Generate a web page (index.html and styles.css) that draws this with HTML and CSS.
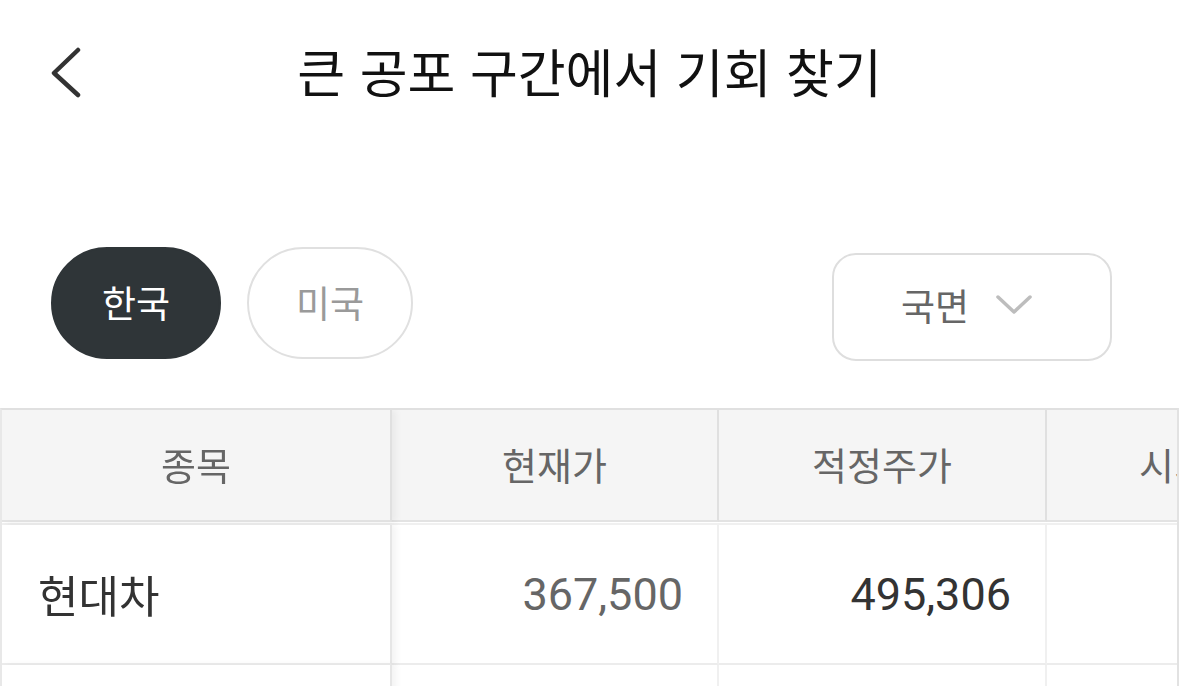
FILE: index.html
```html
<!DOCTYPE html>
<html lang="ko">
<head>
    <meta charset="UTF-8">
    <meta name="viewport" content="width=device-width, initial-scale=1.0">
    <title>큰 공포 구간에서 기회 찾기</title>
    <link rel="stylesheet" href="styles.css">
</head>
<body>
    <header class="topbar">
        <button class="back-btn" aria-label="뒤로">
            <svg width="36" height="52" viewBox="0 0 36 52">
                <polyline points="30,4 6,27 30,49" fill="none" stroke="#333" stroke-width="4.5" stroke-linecap="round" stroke-linejoin="round"/>
            </svg>
        </button>
        <h1 class="title">큰 공포 구간에서 기회 찾기</h1>
        <div></div>
    </header>

    <div class="filters">
        <div class="market-tabs">
            <button class="market-btn active">한국</button>
            <button class="market-btn">미국</button>
        </div>
        <button class="phase-select">
            <span>국면</span>
            <svg width="38" height="24" viewBox="0 0 38 24">
                <polyline points="3,4 19,19 35,4" fill="none" stroke="#bdbdbd" stroke-width="3.5" stroke-linecap="round" stroke-linejoin="round"/>
            </svg>
        </button>
    </div>

    <div class="stock-table">
        <div class="row head">
            <div class="cell name">종목</div>
            <div class="cell">현재가</div>
            <div class="cell">적정주가</div>
            <div class="cell">시가총액</div>
        </div>
        <div class="body">
            <div class="row">
                <div class="cell name">현대차</div>
                <div class="cell num muted">367,500</div>
                <div class="cell num">495,306</div>
                <div class="cell num"></div>
            </div>
            <!-- next row is still loading -->
            <div class="row">
                <div class="cell name"></div>
                <div class="cell num muted"></div>
                <div class="cell num"></div>
                <div class="cell num"></div>
            </div>
        </div>
    </div>
</body>
</html>
```

FILE: styles.css
```css
body {
    margin: 0;
    background-color: #fff;
    color: #222;
    font-family: "Noto Sans CJK KR", "Noto Sans", sans-serif;
    overflow: hidden;
}
button {
    font-family: inherit;
    cursor: pointer;
    outline: none;
}

/* top bar */
.topbar {
    height: 144px;
    display: grid;
    grid-template-columns: 1fr auto 1fr;
    align-items: center;
}
.back-btn {
    justify-self: start;
    margin-left: 48px;
    padding: 0;
    border: none;
    background: none;
    display: flex;
}
.title {
    margin: 0 0 4px;
    font-size: 52px;
    font-weight: 400;
    color: #111;
}

/* market + phase filters */
.filters {
    margin-top: 103px;
    padding: 0 67px 0 51px;
    display: flex;
    justify-content: space-between;
    align-items: flex-start;
}
.market-tabs {
    display: flex;
    gap: 26px;
}
.market-btn {
    width: 166px;
    height: 112px;
    border: 2px solid #e0e0e0;
    border-radius: 56px;
    background-color: #fff;
    color: #9a9a9a;
    font-size: 37px;
    padding-bottom: 4px;
}
.market-btn.active {
    width: 170px;
    border-color: #2f3538;
    background-color: #2f3538;
    color: #fff;
}
.phase-select {
    margin-top: 6px;
    width: 280px;
    height: 108px;
    border: 2px solid #dedede;
    border-radius: 24px;
    background-color: #fff;
    color: #666;
    font-size: 37px;
    display: flex;
    align-items: center;
    justify-content: center;
    gap: 26px;
    padding: 0 10px 4px 0;
}

/* stock table */
.stock-table {
    margin-top: 47px;
    border-top: 2px solid #e0e0e0;
    border-left: 2px solid #e8e8e8;
    overflow: hidden;
    width: 1175px;
    border-right: 2px solid #e2e2e2;
}
.row {
    display: grid;
    grid-template-columns: 390px 327px 328px 326px;
    width: max-content;
}
.cell {
    border-right: 2px solid #f0f0f0;
    display: flex;
    align-items: center;
    justify-content: center;
    font-size: 38px;
    background-color: #fff;
}
.cell.name {
    position: sticky;
    left: 0;
    z-index: 1;
    border-right: 2px solid #e6e6e6;
    box-shadow: 4px 0 7px rgba(0, 0, 0, 0.05);
}
.head .cell {
    height: 112px;
    background-color: #f5f5f5;
    color: #666;
    border-right-color: #e0e0e0;
    border-bottom: 2px solid #e3e3e3;
    padding-bottom: 4px;
    box-sizing: border-box;
}
.body {
    margin-top: 1px;
    border-top: 2px solid #f0f0f0;
}
.body .cell {
    height: 138px;
    border-bottom: 2px solid #ececec;
    color: #333;
}
.body .cell.name {
    justify-content: flex-start;
    padding-left: 36px;
    font-size: 44px;
}
.cell.num {
    justify-content: flex-end;
    padding-right: 34px;
    font-family: Roboto, "Noto Sans", sans-serif;
    font-size: 45px;
}
.cell.muted {
    color: #666;
}
```
